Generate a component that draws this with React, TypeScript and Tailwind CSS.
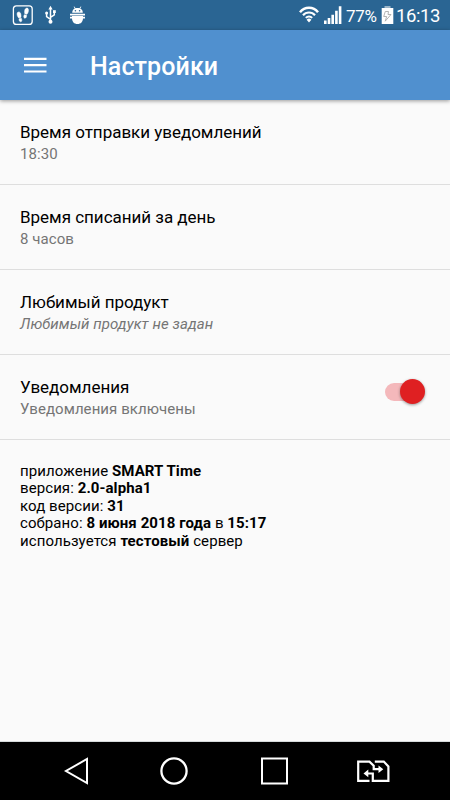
import { ReactNode, useState } from "react";

type SettingRowProps = {
  title: string;
  summary: string;
  italic?: boolean;
  children?: ReactNode;
};

function StatusBar() {
  return (
    <div className="flex h-[30px] items-center justify-between bg-[#2a6593] text-white">
      <svg width="100" height="30" viewBox="0 0 100 30" fill="none">
        <rect x="13.4" y="5.8" width="18.8" height="18.6" rx="3" stroke="#fff" strokeWidth="1.3" />
        <g fill="#fff" stroke="#fff" strokeWidth=".5">
          <path d="M17.4 12.6c1.2-1.3 3-.6 3.4 1.4.3 1.4.3 2.6.1 3.4l-2.2.5c-1.2-1.2-2.2-3.9-1.3-5.3z" />
          <path d="M19 18.8l2.3-.5c.8 1.6.7 3.2-.4 3.5-1.2.2-2-1.2-1.9-3z" />
          <path d="M28 8.5c-1.3-1.1-3 0-3.3 2-.2 1.3-.2 2.5.1 3.3l2.2.5c1.2-1.2 2.1-4.4 1-5.8z" />
          <path d="M26.6 15.2l-2.3-.5c-.8 1.6-.7 3.2.4 3.5 1.2.2 2-1.2 1.9-3z" />
        </g>
        <path d="M50.5 9v12M50.5 19.3l-3.9-2.6v-3M50.5 17.3l3.8-2.4v-3" stroke="#fff" strokeWidth="1.5" />
        <g fill="#fff">
          <path d="M50.5 5.8l2.1 3.8h-4.2z" />
          <circle cx="50.5" cy="21.8" r="2" />
          <circle cx="46.6" cy="12.9" r="1.5" />
          <path d="M53 10.2h2.8v2.8H53z" />
          <path d="M72.2 12.8c0-2.2 1.2-3.7 2.6-4.3l-1.2-1.7.7-.4 1.3 1.8c1.2-.3 2.5-.3 3.8 0l1.3-1.8.7.4-1.2 1.7c1.6.7 2.6 2.1 2.6 4.3z" />
          <path d="M70 13.8h15v1.7H70zM72 16.1h11v1.8c0 3.9-2.1 6-5.5 6s-5.5-2.1-5.5-6z" />
          <path d="M70 16.8h2.5v1.6H70zM82.5 16.8H85v1.6h-2.5z" />
        </g>
        <circle cx="75.4" cy="10.8" r=".8" fill="#2a6593" />
        <circle cx="79.6" cy="10.8" r=".8" fill="#2a6593" />
      </svg>
      <div className="flex items-center pr-[10px]">
        <svg width="46" height="30" viewBox="0 0 46 30" fill="none">
          <g stroke="#fff" strokeWidth="2">
            <path d="M2 12.2a11.5 11.5 0 0 1 18 0" strokeWidth="2.5" />
            <path d="M5 15.2a8 8 0 0 1 12 0" strokeWidth="2.2" />
            <path d="M7.8 17.9a4.6 4.6 0 0 1 6.4 0" />
          </g>
          <path d="M8.6 19.7a3.5 3.5 0 0 1 4.8 0L11 22.5z" fill="#fff" />
          <g fill="#fff">
            <path d="M26 20.6h2.6V24H26zM29.7 18h2.6v6h-2.6zM33.4 14.8H36V24h-2.6z" />
            <path d="M37.1 10.8h2.6V24h-2.6zM40.8 6.2h2.6V24h-2.6z" />
          </g>
        </svg>
        <span className="ml-[2px] mt-px w-[31px] whitespace-nowrap text-[17px] leading-[30px] tracking-[-0.3px]">77%</span>
        <svg className="ml-[4px]" width="13" height="30" viewBox="0 0 13 30" fill="none">
          <path d="M3.5 6h6v2h-6z" fill="#9bb5c9" />
          <path d="M.7 8h11.6v16H.7z" fill="#fff" />
          <path d="M7.5 11.5H4.3l-1.6 5h3l-1.5 4.7 5.8-6.7H7z" stroke="#aaa" strokeWidth=".9" />
        </svg>
        <span className="ml-[2px] mt-px w-[44px] whitespace-nowrap text-[18.5px] leading-[30px] tracking-[-0.4px]">16:13</span>
      </div>
    </div>
  );
}

function Toolbar() {
  return (
    <header className="relative flex h-[70px] items-center bg-[#5090cf] pl-6 text-white shadow-[0_1px_4px_rgba(0,0,0,0.4)]">
      <button type="button" aria-label="Меню">
        <svg width="23" height="16" viewBox="0 0 23 16" fill="#fff">
          <path d="M0 .8h22.5V3H0zM0 7.1h22.5v2.2H0zM0 13.4h22.5v2.2H0z" />
        </svg>
      </button>
      <h1 className="ml-[43px] pt-[3px] text-[25px] font-medium leading-[30px] tracking-[0.1px]">Настройки</h1>
    </header>
  );
}

function SettingRow({ title, summary, italic, children }: SettingRowProps) {
  return (
    <div className="flex h-[85px] items-start justify-between border-b border-[#dedede] pl-5 pr-[25px] pt-[21px]">
      <div>
        <div className="text-[17px] leading-[22px] tracking-[-0.02px] text-black">{title}</div>
        <div
          className={`text-[15px] leading-[22px] tracking-[0.07px] text-[#757575] ${italic ? "italic" : ""}`}
        >
          {summary}
        </div>
      </div>
      {children}
    </div>
  );
}

function Switch({ checked, onChange }: { checked: boolean; onChange: () => void }) {
  return (
    <button
      type="button"
      role="switch"
      aria-checked={checked}
      aria-label="Уведомления"
      onClick={onChange}
      className="relative mt-[3px] h-[26px] w-[40px]"
    >
      <span className={`absolute left-0 top-1 h-[18px] w-[36px] rounded-full ${checked ? "bg-[#f4b8bb]" : "bg-[#b9b9b9]"}`} />
      <span
        className={`absolute top-0 h-[25px] w-[25px] rounded-full shadow-[0_1px_3px_rgba(0,0,0,0.4)] ${
          checked ? "right-0 bg-[#df2022]" : "left-0 bg-[#f1f1f1]"
        }`}
      />
    </button>
  );
}

function NavigationBar() {
  return (
    <nav className="flex h-[59px] items-center justify-between border-t border-[#d5dadb] bg-black pl-[61px] pr-[60px] text-white">
      <svg width="30" height="30" viewBox="0 0 30 30" fill="none" stroke="#fff" strokeWidth="2">
        <path d="M26 3v24L5 15z" />
      </svg>
      <svg width="30" height="30" viewBox="0 0 30 30" fill="none" stroke="#fff" strokeWidth="2.3">
        <circle cx="15" cy="15" r="12.6" />
      </svg>
      <svg width="30" height="30" viewBox="0 0 30 30" fill="none" stroke="#fff" strokeWidth="2">
        <path d="M4 2.5h25v25H4z" />
      </svg>
      <svg width="34" height="30" viewBox="0 0 34 30" fill="none" stroke="#fff" strokeWidth="2.2">
        <path d="M13.5 24.8H2.2V5.6h11.3l4.2 4.2v3.4h7" />
        <path d="M18.8 5.6h9l4.6 4.9v14.3H16.8v-7.3H10" />
        <path d="M22.5 9.6l4.8 3.6-4.8 3.8zM12.3 13.5l-4.8 4 4.8 3.8z" fill="#fff" stroke="none" />
      </svg>
    </nav>
  );
}

export default function App() {
  const [notifications, setNotifications] = useState(true);

  return (
    <div className="flex h-[800px] w-[450px] flex-col overflow-hidden bg-[#fafafa] font-['Roboto',sans-serif]">
      <StatusBar />
      <Toolbar />
      <main className="flex-1">
        <SettingRow title="Время отправки уведомлений" summary="18:30" />
        <SettingRow title="Время списаний за день" summary="8 часов" />
        <SettingRow title="Любимый продукт" summary="Любимый продукт не задан" italic />
        <SettingRow title="Уведомления" summary="Уведомления включены">
          <Switch checked={notifications} onChange={() => setNotifications(!notifications)} />
        </SettingRow>
        <div className="px-5 pt-[22.5px] text-[15px] leading-[17.5px] tracking-[0.08px] text-black">
          <p>приложение <b>SMART Time</b></p>
          <p>версия: <b>2.0-alpha1</b></p>
          <p>код версии: <b>31</b></p>
          <p>собрано: <b>8 июня 2018 года</b> в <b>15:17</b></p>
          <p>используется <b>тестовый</b> сервер</p>
        </div>
      </main>
      <NavigationBar />
    </div>
  );
}
